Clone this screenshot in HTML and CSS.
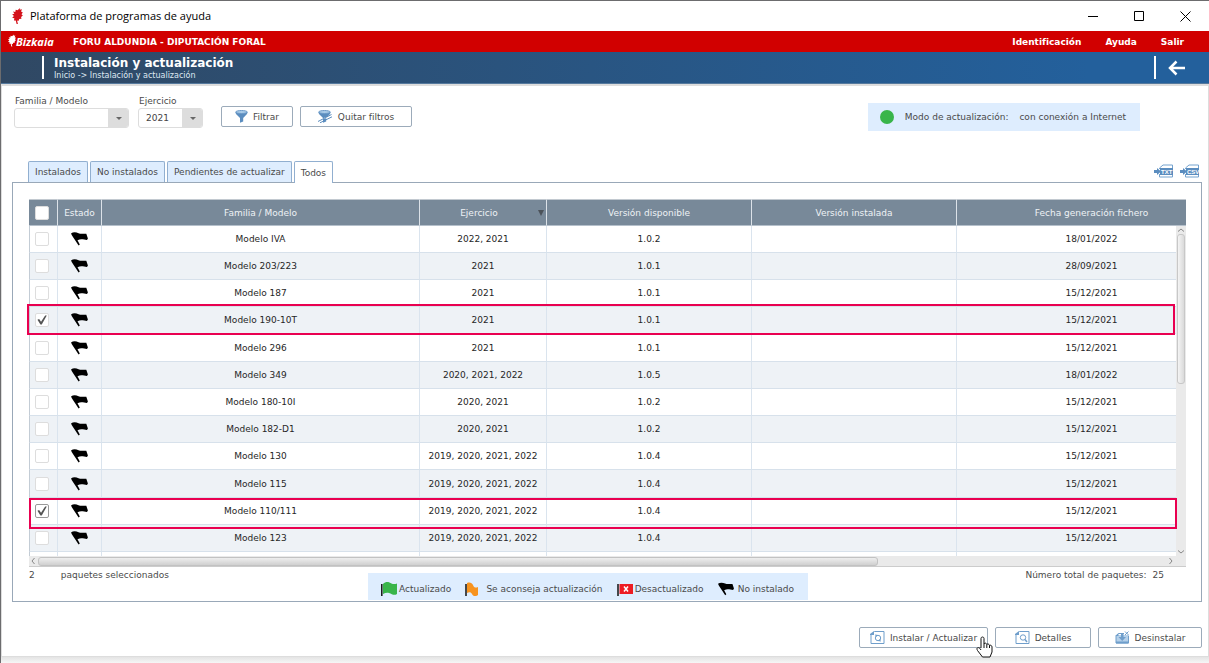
FILE: index.html
```html
<!DOCTYPE html>
<html lang="es">
<head>
<meta charset="utf-8">
<title>Plataforma de programas de ayuda</title>
<link rel="stylesheet" href="styles.css">
</head>
<body>
<svg class="defs" aria-hidden="true">
  <symbol id="leaf" viewBox="0 0 12 18"><path d="M9 0 8.500 2 11 1.500 10 4 12 5 10.500 7 12 8.500 10 10 10.500 12 8 12.500 7 14.500 5.500 14 6.500 18 5 18 4 14 2 14 2.500 11.500 0 11 2 9 0 7 2.500 6.500 1 4 3.500 4.500 4 2 6 2.500Z"/></symbol>
  <symbol id="flag" viewBox="0 0 18 14"><path d="M0 1.500C2 0 5 0 7.500 1.300 10 2.300 13 1.400 15.300 1.800L16.900 6.500 16 8C13 8 10.500 6.300 6.500 8.200L8.800 12.500 7.600 13.500 1 3.500Z"/></symbol>
  <symbol id="funnel" viewBox="0 0 13 13"><path fill="#5b8dbf" d="M.3 2 1 4 5 8V12.800L8.200 11.500V8L12 4 12.700 2Z"/><ellipse cx="6.500" cy="2" rx="5.800" ry="1.500" fill="#a9cbe8" stroke="#6c9ac8"/></symbol>
</svg>
<div class="window">
  <header class="titlebar">
    <svg class="leaf"><use href="#leaf"/></svg>
    <span class="app-name">Plataforma de programas de ayuda</span>
    <button class="win" aria-label="Minimizar"><svg viewBox="0 0 11 11"><path d="M0 5.500H10"/></svg></button>
    <button class="win" aria-label="Maximizar"><svg viewBox="0 0 11 11"><path d="M.5.500H9.500V9.500H.5Z"/></svg></button>
    <button class="win" aria-label="Cerrar"><svg viewBox="0 0 11 11"><path d="M.5.500 10.500 10.500M10.500.500.500 10.500"/></svg></button>
  </header>
  <div class="brandbar">
    <svg class="brand-leaf"><use href="#leaf"/></svg>
    <span class="brand">Bizkaia</span>
    <span class="org">FORU ALDUNDIA - DIPUTACIÓN FORAL</span>
    <nav class="menu"><a href="#">Identificación</a><a href="#">Ayuda</a><a href="#">Salir</a></nav>
  </div>
  <div class="pagebar">
    <div class="heading"><h1>Instalación y actualización</h1><p>Inicio -&gt; Instalación y actualización</p></div>
    <button class="back" aria-label="Volver"><svg viewBox="0 0 18 16"><path d="M17 8H2M8.500 1.500 2 8 8.500 14.500"/></svg></button>
  </div>
  <main>
    <div class="filters">
      <div class="field family"><label for="familia">Familia / Modelo</label><div class="combo"><select id="familia"><option></option></select></div></div>
      <div class="field year"><label for="ejercicio">Ejercicio</label><div class="combo"><select id="ejercicio"><option>2021</option></select></div></div>
      <button class="btn filter"><svg viewBox="0 0 13 13"><use href="#funnel"/></svg>Filtrar</button>
      <button class="btn clear"><svg viewBox="0 0 15 13"><use href="#funnel" width="13" height="13"/><path d="M0 10.500 14 5.500" stroke="#fff"/><path d="M0 11.500 13.500 4.500M2 12.800 14 6.800" stroke="#5b8dbf"/></svg>Quitar filtros</button>
      <div class="mode"><i class="dot"></i><span>Modo de actualización:</span><span>con conexión a Internet</span></div>
    </div>
    <div class="tabs">
      <button>Instalados</button><button>No instalados</button><button>Pendientes de actualizar</button><button class="active">Todos</button>
      <div class="exports">
        <button aria-label="Exportar TXT"><svg viewBox="0 0 20 14"><path class="page" d="M5.500 5V4L9 1H18.500V13H5.500V10"/><path class="arrow" d="M0 6H3V4L7 7.500 3 11V9H0Z"/><path class="arrow" d="M6 4H19V11H6Z"/><text x="7" y="10">TXT</text></svg></button>
        <button aria-label="Exportar CSV"><svg viewBox="0 0 20 14"><path class="page" d="M5.500 5V4L9 1H18.500V13H5.500V10"/><path class="arrow" d="M0 6H3V4L7 7.500 3 11V9H0Z"/><path class="arrow" d="M6 4H19V11H6Z"/><text x="7" y="10">CSV</text></svg></button>
      </div>
    </div>
    <section class="panel">
      <div class="grid">
        <div class="viewport">
        <table>
          <colgroup><col class="c-check"><col class="c-state"><col><col class="c-year"><col class="c-ver"><col class="c-ver"><col class="c-date"></colgroup>
          <thead><tr><th><input type="checkbox" aria-label="Seleccionar todos"></th><th>Estado</th><th>Familia / Modelo</th><th class="sorted">Ejercicio</th><th>Versión disponible</th><th>Versión instalada</th><th>Fecha generación fichero</th></tr></thead>
          <tbody>
            <tr><td><input type="checkbox" aria-label="Modelo IVA"></td><td><svg class="flag"><use href="#flag"/></svg></td><td>Modelo IVA</td><td>2022, 2021</td><td>1.0.2</td><td></td><td>18/01/2022</td></tr>
            <tr><td><input type="checkbox" aria-label="Modelo 203/223"></td><td><svg class="flag"><use href="#flag"/></svg></td><td>Modelo 203/223</td><td>2021</td><td>1.0.1</td><td></td><td>28/09/2021</td></tr>
            <tr><td><input type="checkbox" aria-label="Modelo 187"></td><td><svg class="flag"><use href="#flag"/></svg></td><td>Modelo 187</td><td>2021</td><td>1.0.1</td><td></td><td>15/12/2021</td></tr>
            <tr><td><input type="checkbox" checked aria-label="Modelo 190-10T"></td><td><svg class="flag"><use href="#flag"/></svg></td><td>Modelo 190-10T</td><td>2021</td><td>1.0.1</td><td></td><td>15/12/2021</td></tr>
            <tr><td><input type="checkbox" aria-label="Modelo 296"></td><td><svg class="flag"><use href="#flag"/></svg></td><td>Modelo 296</td><td>2021</td><td>1.0.1</td><td></td><td>15/12/2021</td></tr>
            <tr><td><input type="checkbox" aria-label="Modelo 349"></td><td><svg class="flag"><use href="#flag"/></svg></td><td>Modelo 349</td><td>2020, 2021, 2022</td><td>1.0.5</td><td></td><td>18/01/2022</td></tr>
            <tr><td><input type="checkbox" aria-label="Modelo 180-10I"></td><td><svg class="flag"><use href="#flag"/></svg></td><td>Modelo 180-10I</td><td>2020, 2021</td><td>1.0.2</td><td></td><td>15/12/2021</td></tr>
            <tr><td><input type="checkbox" aria-label="Modelo 182-D1"></td><td><svg class="flag"><use href="#flag"/></svg></td><td>Modelo 182-D1</td><td>2020, 2021</td><td>1.0.2</td><td></td><td>15/12/2021</td></tr>
            <tr><td><input type="checkbox" aria-label="Modelo 130"></td><td><svg class="flag"><use href="#flag"/></svg></td><td>Modelo 130</td><td>2019, 2020, 2021, 2022</td><td>1.0.4</td><td></td><td>15/12/2021</td></tr>
            <tr><td><input type="checkbox" aria-label="Modelo 115"></td><td><svg class="flag"><use href="#flag"/></svg></td><td>Modelo 115</td><td>2019, 2020, 2021, 2022</td><td>1.0.4</td><td></td><td>15/12/2021</td></tr>
            <tr><td><input class="focused" type="checkbox" checked aria-label="Modelo 110/111"></td><td><svg class="flag"><use href="#flag"/></svg></td><td>Modelo 110/111</td><td>2019, 2020, 2021, 2022</td><td>1.0.4</td><td></td><td>15/12/2021</td></tr>
            <tr><td><input type="checkbox" aria-label="Modelo 123"></td><td><svg class="flag"><use href="#flag"/></svg></td><td>Modelo 123</td><td>2019, 2020, 2021, 2022</td><td>1.0.4</td><td></td><td>15/12/2021</td></tr>
            <tr class="cut"><td></td><td></td><td></td><td></td><td></td><td></td><td></td></tr>
          </tbody>
        </table>
        </div>
        <div class="vbar"><svg viewBox="0 0 6 4"><path d="M0 3.500 3 1 6 3.500"/></svg><i></i><svg viewBox="0 0 6 4"><path d="M0 .5 3 3 6 .5"/></svg></div>
        <div class="hbar"><svg viewBox="0 0 4 6"><path d="M3.500 0 1 3 3.500 6"/></svg><div class="track"><i></i></div><svg viewBox="0 0 4 6"><path d="M.5 0 3 3 .5 6"/></svg></div>
        <div class="mark first"></div>
        <div class="mark second"></div>
      </div>
      <div class="summary">
        <div class="selected"><span>2</span><span>paquetes seleccionados</span></div>
        <div class="legend">
          <span class="ok"><svg viewBox="0 0 17 14"><path d="M.8 2V14" stroke="#111" stroke-width="1.500"/><path fill="#39b54a" d="M2 2C5-1 8 0 10.500 1.500 12.500 2.500 14.500 2 16 1.500V12C13 14 11 12 8 11 6 10.500 4 11 2 12Z"/></svg>Actualizado</span>
          <span class="advised"><svg viewBox="0 0 14 14"><path d="M1 2V14" stroke="#111" stroke-width="1.500"/><path fill="#f7931e" d="M2 1C5 0 7 1 8 3 9 6 11 6 13 5V13C10 15 8 14 7 12 6 10 4 10 2 11Z"/></svg>Se aconseja actualización</span>
          <span class="outdated"><svg viewBox="0 0 17 14"><path d="M1 2V14" stroke="#111" stroke-width="1.500"/><path fill="#ed1c24" d="M2.500 2H16V12H2.500Z"/><path d="M7 4.500 11 9.500M11 4.500 7 9.500" stroke="#fff" stroke-width="1.500"/></svg>Desactualizado</span>
          <span class="missing"><svg class="flag"><use href="#flag"/></svg>No instalado</span>
        </div>
        <div class="total"><span>Número total de paquetes:</span><span>25</span></div>
      </div>
    </section>
    <div class="actions">
      <button class="btn install"><svg viewBox="0 0 15 13"><path class="doc" d="M1 4V12.500H14V.500H4.500L1 4"/><path class="solid" d="M0 3 4 0V4H0Z"/><circle class="doc" cx="8" cy="7" r="2.700"/><path class="solid" d="M5 3.500 8 4 6 6ZM11 10.500 8 10 10 8Z"/></svg>Instalar / Actualizar
        <svg class="cursor" viewBox="0 0 17 22"><path d="M5 12V2.500C5 .5 8 .5 8 2.500V8C8.500 6.500 10.500 7 10.800 8.500 11.500 7.500 13.300 8 13.500 9.500 14.500 8.700 16 9.500 16 11V16L14 21H6.500L1.500 14.500C0 12 2 10.500 4 12.500L5 14M8 8V12M10.800 8.500V12M13.500 9.500V12"/></svg>
      </button>
      <button class="btn details"><svg viewBox="0 0 15 13"><path class="doc" d="M1 4V12.500H14V.500H4.500L1 4"/><path class="solid" d="M0 3 4 0V4H0Z"/><circle class="doc" cx="8" cy="6.500" r="2.700"/><path class="doc" d="M10 8.500 12 11" stroke-width="1.500"/></svg>Detalles</button>
      <button class="btn remove"><svg viewBox="0 0 15 13"><path fill="#b5d0e9" d="M1 4H13V12H1Z"/><path class="doc" d="M13.500 4.500V12H1V5L3.500 2.500H9"/><path class="solid" d="M0 5 3.500 2V5ZM1 10.500H13.500V12.500H1ZM6 3H8.500V6H11L7.200 10 3.500 6H6Z"/><path class="doc" d="M10 .5 13.500 4M13.500.5 10 4"/></svg>Desinstalar</button>
    </div>
  </main>
</div>
</body>
</html>
```
FILE: styles.css
```css
* { box-sizing: border-box; }
body { margin: 0; background: #fff; color: #4a4a4a; font: 9px/12px "DejaVu Sans", sans-serif; }
button { margin: 0; padding: 0; border: 0; background: none; color: inherit; font: inherit; }
svg { display: block; flex: none; }
.defs { position: absolute; width: 0; height: 0; }
.window { display: flex; flex-direction: column; min-height: 100vh; border-top: 1px solid #6c6c6e; border-left: 1px solid #6c6c6e; }

.titlebar { display: flex; align-items: center; height: 30px; padding: 0 1px 0 11px; }
.leaf { width: 11px; height: 16px; fill: #d4121b; }
.app-name { margin: 0 auto 0 7px; color: #000; font: 11px/16px "Open Sans", sans-serif; }
.win { display: grid; place-items: center; width: 46px; height: 30px; }
.win svg { width: 11px; height: 11px; fill: none; stroke: #000; }

.brandbar { display: flex; align-items: center; height: 21px; padding: 1px 25px 0 7px; background: #d10000; color: #fff; font-weight: bold; }
.brand-leaf { width: 8px; height: 13px; fill: #fff; margin-bottom: 4px; }
.brand { width: 57px; font: italic bold 11px/14px "Open Sans", sans-serif; }
.menu { display: flex; gap: 24px; margin-left: auto; }
.menu a { color: #fff; text-decoration: none; }

.pagebar { display: flex; align-items: center; justify-content: space-between; height: 32px; padding: 0 23px 0 41px; color: #fff; background: linear-gradient(90deg, #304863, #23609c 90%); border-bottom: 1px solid #55799d; }
.heading { height: 23px; padding-left: 10px; border-left: 2px solid #fff; }
.heading h1 { margin: 0; font-size: 12px; line-height: 14px; }
.heading p { margin: 0; font-size: 8px; line-height: 12px; color: #dfe8f2; }
.back { height: 23px; padding-left: 12px; border-left: 2px solid #fff; }
.back svg { width: 18px; height: 16px; fill: none; stroke: #fff; stroke-width: 2.500; }

main { flex: 1; padding: 9px 6px 8px 10px; border: solid #ddd; border-width: 2px 1px 1px; }
.window::after { content: ""; height: 6px; background: linear-gradient(#e4e4e4, #f6f6f6); }
.filters { display: flex; align-items: flex-start; padding-left: 2px; }
.field { display: grid; gap: 1px; }
.field label { padding-left: 1px; }
.family { width: 115px; margin-right: 9px; }
.year { width: 65px; margin-right: 18px; }
.combo { position: relative; height: 20px; border: 1px solid #ddd; border-radius: 3px; background: #fff; overflow: hidden; }
.combo::before { content: ""; position: absolute; inset: 0 0 0 auto; width: 20px; background: #ddd; pointer-events: none; }
.combo::after { content: ""; position: absolute; right: 6px; top: 8px; border: solid transparent; border-width: 3px 3px 0; border-top-color: #666; pointer-events: none; }
.combo select { appearance: none; width: 100%; height: 18px; padding: 0 20px 0 7px; border: 0; background: none; color: #444; font: inherit; }
.btn { position: relative; display: flex; align-items: center; justify-content: center; gap: 5px; height: 21px; border: 1px solid #9cabba; border-radius: 2px; background: #fff; }
.btn svg { height: 13px; }
.filters .btn { margin-top: 11px; }
.filter { width: 72px; margin-right: 7px; }
.filter svg { width: 13px; }
.clear { width: 112px; }
.clear svg, .actions .btn > svg { width: 15px; }
.mode { display: flex; align-items: center; gap: 11px; height: 28px; margin: 8px 62px 0 auto; padding: 0 14px 0 12px; background: #deedfe; }
.dot { width: 14px; height: 14px; border-radius: 50%; background: #39b54a; }

.tabs { display: flex; gap: 2px; margin-top: 30px; padding-left: 16px; }
.tabs > button { height: 21px; padding: 0 6px; border: 1px solid #91afd0; border-bottom: 0; border-radius: 2px 2px 0 0; background: #deedfe; }
.tabs > .active { height: 22px; margin-bottom: -1px; background: #fff; z-index: 1; }
.exports { display: flex; align-items: flex-start; gap: 6px; margin: 3px 2px 0 auto; }
.exports svg { width: 20px; height: 14px; }
.page { fill: none; stroke: #75a3cf; }
.arrow { fill: #5b8dbf; }
.exports text { fill: #fff; font: bold 6px/6px "Liberation Sans", sans-serif; }

.panel { padding: 16px 15px 1px 16px; border: 1px solid #99a8b8; }
.grid { position: relative; }
.viewport { overflow: hidden; }
table { width: calc(100% + 41px); table-layout: fixed; border-collapse: separate; border-spacing: 0; text-align: center; }
.c-check { width: 29px; }
.c-state { width: 44px; }
.c-year { width: 127px; }
.c-ver { width: 205px; }
.c-date { width: 270px; }
th, td { padding: 0; border-right: 1px solid #dae4ee; }
th { position: relative; height: 27px; border-color: #dce2e8; border-bottom: 1px solid #b5c0cb; border-top: 1px solid #c2c9d0; background: #788999; color: #eef2f5; font-weight: normal; }
.sorted { padding-right: 8px; }
.sorted::after { content: ""; position: absolute; right: 2px; top: 10px; border: solid transparent; border-width: 6px 3px 0; border-top-color: #4b5259; }
td { height: 27px; border-bottom: 1px solid #d7e1eb; color: #262626; }
tr:nth-child(5n) td { height: 28px; }
td:first-child { border-left: 1px solid #c3ccd5; }
tr:nth-child(even) td { background: #eef2f6; }
tbody .cut td { height: 4px; border-bottom: 0; }
.flag { width: 18px; height: 14px; margin: 0 auto; }
input { appearance: none; display: block; width: 14px; height: 14px; margin: 0 auto 0 5px; border: 1px solid #ddd; border-radius: 2px; background: #fff; }
th input { margin-left: 6px; }
input:checked::before { content: ""; display: block; height: 12px; background: #555; clip-path: polygon(12% 48%, 26% 42%, 42% 65%, 76% 12%, 90% 12%, 48% 88%, 37% 88%); }
.focused { border-color: #999; }
.vbar { position: absolute; right: 0; top: 27px; bottom: 11px; width: 10px; display: flex; flex-direction: column; align-items: center; gap: 2px; padding: 2px 0; background: #eaeaea; }
.vbar i { width: 8px; height: 150px; margin-bottom: auto; border: 1px solid #c8c8c8; border-radius: 3px; background: linear-gradient(90deg, #f4f4f4, #dadada); }
.vbar svg { width: 6px; height: 4px; }
.vbar path, .hbar path { fill: none; stroke: #888; }
.hbar { display: flex; align-items: center; gap: 3px; height: 11px; padding: 0 13px 0 2px; border-bottom: 1px solid #ccc; background: #eaeaea; }
.hbar svg { width: 4px; height: 6px; }
.track { flex: 1; }
.track i { display: block; width: 74.5%; height: 9px; border: 1px solid #c2c2c2; border-radius: 3px; background: linear-gradient(#eee, #d0d0d0); }
.mark { position: absolute; height: 31px; border: 2px solid #e90050; }
.first { left: -2px; right: 11px; top: 105px; }
.second { left: 0; right: 9px; top: 299px; }

.summary { display: flex; justify-content: space-between; padding-right: 22px; }
.selected { display: flex; gap: 26px; width: 339px; padding-top: 2px; }
.total { display: flex; gap: 6px; margin-left: auto; padding-top: 2px; }
.legend { display: flex; align-items: center; height: 27px; width: 440px; margin-top: 6px; padding: 4px 14px 0 13px; background: #deedfe; justify-content: space-between; }
.legend span { display: flex; align-items: center; gap: 1px; }
.legend .advised { gap: 7px; }
.legend .missing { gap: 3px; }
.legend svg { width: 17px; height: 14px; }
.legend .advised svg { width: 14px; }

.actions { display: flex; justify-content: flex-end; gap: 7px; margin-top: 25px; }
.install { width: 129px; }
.details { width: 96px; }
.remove { width: 104px; }
.doc { fill: none; stroke: #6f9ecb; }
.solid { fill: #6f9ecb; }
.actions .install .cursor { position: absolute; right: -6px; top: 8px; width: 17px; height: 22px; fill: #fff; stroke: #111; }
```
